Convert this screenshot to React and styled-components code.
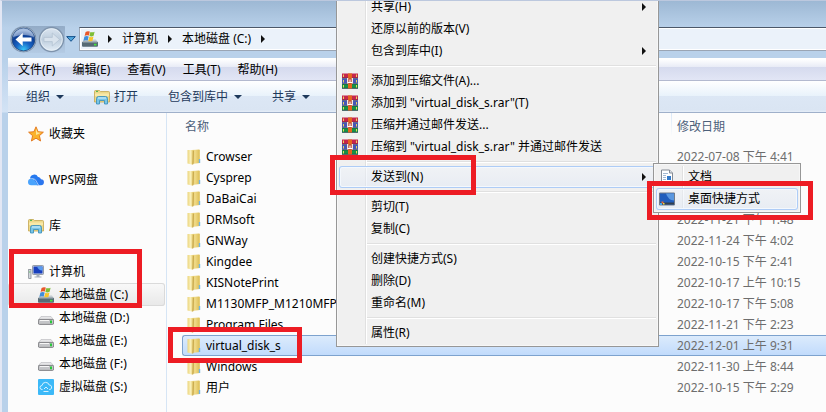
// Windows 7 explorer window with the "send to" context menu open

import React, { useState } from "react";
import styled, { createGlobalStyle, css } from "styled-components";

const GlobalStyle = createGlobalStyle`
  * {
    box-sizing: border-box;
  }
  body {
    margin: 0;
    overflow: hidden;
    background: #fcfcfc;
    font: 12px/20px "Noto Sans", "Noto Sans CJK SC", sans-serif;
    color: #000;
  }
  button {
    border: 0;
    padding: 0;
    background: none;
    color: inherit;
    font: inherit;
    white-space: nowrap;
  }
  svg {
    display: block;
    flex: none;
  }
`;

const Frame = styled.div`
  position: relative;
  display: flex;
  flex-direction: column;
  min-height: 100vh;
  overflow: hidden;
  padding-left: 6px;
  border-top: 1px solid #bcc8de;
  border-left: 2px solid #e3e7f4;
  background: linear-gradient(
    #9db8d4 0,
    #b9d1ea 27px,
    #b9d1ea 60px,
    #d3e3f5 111px,
    #b9d1ea 112px
  );
`;

const NavBar = styled.div`
  display: flex;
  align-items: center;
  height: 57px;
  padding: 19px 0 0 2px;
`;

const NavButtons = styled.div`
  display: flex;
  align-items: center;
  gap: 1px;
  margin-right: 3px;
  border-radius: 14px;
  background: linear-gradient(#93abc6, #b4cbe4) 0 0 / 55px 100% no-repeat;
`;

const Address = styled.div`
  display: flex;
  flex: 1;
  align-items: center;
  gap: 10px;
  height: 24px;
  padding-left: 2px;
  border: 1px solid #9aa5b4;
  border-top-color: #4c5869;
  border-right: 0;
  background: #ebf2fa;
  box-shadow: inset 1px 1px #fff, inset 0 -1px #fff;
`;

const MenuBar = styled.nav`
  display: flex;
  align-items: center;
  gap: 17px;
  height: 23px;
  padding-left: 10px;
  border-top: 1px solid #fff;
  border-bottom: 1px solid #b3b9cf;
  background: linear-gradient(#fff, #e8ebf6 8px, #d5daee 8px, #e2e6f5);
`;

const Toolbar = styled.div`
  display: flex;
  align-items: center;
  gap: 30px;
  height: 32px;
  padding-left: 18px;
  border-bottom: 1px solid #9fb0ca;
  background: linear-gradient(#fff, #e8f2fb 15px, #dce7f5 15px, #dae5f3 29px, #e6eef8);
  color: #1e395b;
`;

const ToolButton = styled.button`
  display: flex;
  align-items: center;
  gap: ${(props) => (props.$icon ? "4px" : "6px")};
`;

const Body = styled.div`
  display: flex;
  flex: 1;
  background: #fcfcfc;
`;

const Sidebar = styled.aside`
  flex: none;
  width: 159px;
  padding: 9px 1px 0 0;
  border-right: 1px solid #d6e5f5;
`;

const Place = styled.button`
  display: flex;
  align-items: center;
  gap: 5px;
  width: 100%;
  height: 23px;
  padding-left: ${(props) => (props.$nested ? "30px" : "20px")};
  margin-bottom: ${(props) => (props.$apart ? "23px" : "0")};
  ${(props) =>
    props.$active &&
    css`
      border-radius: 3px;
      background: linear-gradient(#f9f9f9, #e8e8e8);
      box-shadow: inset 0 0 0 1px #dadada;
    `}
`;

const Files = styled.main`
  flex: 1;
  padding-left: 15px;
`;

const FileTable = styled.table`
  width: 100%;
  table-layout: fixed;
  border-collapse: separate;
  border-spacing: 0;
`;

const HeadCell = styled.th`
  width: ${(props) => props.$width};
  height: 33px;
  padding: 0 0 5px ${(props) => (props.$width ? "3px" : "6px")};
  text-align: left;
  font-weight: 400;
  color: #4c607a;
  ${(props) =>
    !props.$width &&
    css`
      background: linear-gradient(#d9e7f7, #fcfcfc 24px) 0 0 / 1px 100% no-repeat;
    `}
`;

const FileRow = styled.tr`
  td {
    height: 21px;
    padding: 0 0 0 6px;
    line-height: 19px;
    white-space: nowrap;
    color: #6d6d6d;
    border: solid transparent;
    border-width: 1px 0;
  }
  td:first-child {
    padding-left: 4px;
    color: #000;
    border-left-width: 1px;
  }
  ${(props) =>
    props.$selected &&
    css`
      td {
        border-color: #7da2ce;
        background: linear-gradient(#dcebfc, #c1dbfc);
        background-clip: padding-box;
      }
      td:first-child {
        border-radius: 3px 0 0 3px;
      }
    `}
`;

const FileName = styled.div`
  display: flex;
  align-items: center;
  gap: 5px;
`;

const Popup = styled.div`
  position: absolute;
  top: ${(props) => props.$top}px;
  left: ${(props) => props.$left}px;
  width: ${(props) => props.$width}px;
  padding: 2px;
  border: 1px solid #979797;
  background: linear-gradient(90deg, #e0e0e0 1px, #fff 1px) 28px 2px / 2px
    calc(100% - 4px) no-repeat #f0f0f0;
  box-shadow: inset 0 0 0 1px #f7f7f7;
`;

const PopupItem = styled.button`
  display: grid;
  grid-template-columns: 27px 1fr 14px;
  align-items: center;
  gap: 2px;
  width: 100%;
  height: 22px;
  padding-left: 3px;
  border-radius: 3px;
  text-align: left;
  ${(props) =>
    props.$active &&
    css`
      background: linear-gradient(#f1f5fb80, #dfe8f680);
      box-shadow: inset 0 0 0 1px #aeccf6, inset 0 0 0 2px #f4f8fd;
    `}
`;

const Divider = styled.hr`
  height: 2px;
  margin: 3px 0 3px 28px;
  border: 0;
  border-top: 1px solid #e0e0e0;
  background: #fff;
`;

const Marker = styled.div`
  position: absolute;
  top: ${(props) => props.$box[1]}px;
  left: ${(props) => props.$box[0]}px;
  width: ${(props) => props.$box[2]}px;
  height: ${(props) => props.$box[3]}px;
  border: 5px solid #ed1c24;
  pointer-events: none;
`;

const RightArrow = () => (
  <svg width="4" height="8" viewBox="0 0 4 8">
    <path d="M0 0l4 4-4 4z" fill="#111" />
  </svg>
);

const DownArrow = () => (
  <svg width="8" height="4" viewBox="0 0 8 4">
    <path d="M0 0h8L4 4z" fill="#1e395b" />
  </svg>
);

const BackIcon = () => (
  <svg width="27" height="27" viewBox="0 0 27 27">
    <defs>
      <radialGradient id="back" cx=".5" cy=".95" r=".85">
        <stop offset="0" stopColor="#38c8f8" />
        <stop offset=".4" stopColor="#1763c4" />
        <stop offset=".75" stopColor="#0d3e94" />
        <stop offset="1" stopColor="#6d93cb" />
      </radialGradient>
    </defs>
    <circle cx="13.5" cy="13.5" r="12.8" fill="#6c809b" />
    <circle cx="13.5" cy="13.5" r="12" fill="#d6e4f2" />
    <circle cx="13.5" cy="13.5" r="11.4" fill="url(#back)" stroke="#1c4378" strokeWidth=".8" />
    <path d="M3 11a10.7 10.7 0 0 1 21 0q-10-4-21 0z" fill="#fff" opacity=".4" />
    <path d="M5.5 13.5l7.2-6.5v4.4h8.8v4.2h-8.8V20z" fill="#fff" />
  </svg>
);

const ForwardIcon = () => (
  <svg width="27" height="27" viewBox="0 0 27 27">
    <defs>
      <linearGradient id="forward" x2="0" y2="1">
        <stop offset="0" stopColor="#dce6f0" />
        <stop offset=".5" stopColor="#bdcddd" />
        <stop offset="1" stopColor="#e4eef7" />
      </linearGradient>
    </defs>
    <circle cx="13.5" cy="13.5" r="12" fill="url(#forward)" stroke="#7e93ac" strokeWidth="1.4" />
    <circle cx="13.5" cy="13.5" r="10.8" fill="none" stroke="#e9f1f8" strokeWidth=".8" />
    <path
      d="M21.5 13.5L14.3 7v4.4H6v4.2h8.3V20z"
      fill="#d9e3ed"
      stroke="#b0c0d0"
      strokeWidth=".7"
    />
  </svg>
);

const HistoryIcon = () => (
  <svg width="10" height="6" viewBox="0 0 10 6">
    <path d="M.7.6h8.6L5 5.3z" fill="#4fa6dc" stroke="#17518b" />
  </svg>
);

const SystemDriveIcon = () => (
  <svg width="16" height="16" viewBox="0 0 16 16">
    <path d="M2 8.5h12l2 3H0z" fill="#c3cbd0" />
    <rect y="10.8" width="16" height="5" rx="1" fill="#566a75" />
    <path d="M1 11.3h14" stroke="#93a6af" strokeWidth=".8" />
    <path d="M12 12.8h2.5v1.700H12z" fill="#45e33e" />
    <path d="M3.600.9Q5.800-.4 7.800.6L6.900 4.600Q4.700 3.600 2.600 4.900z" fill="#e8572a" />
    <path d="M8.400.9q2 1 4.200-.2l-1 4.100q-2.200 1.200-4.200.2z" fill="#7dbd37" />
    <path d="M2.400 5.600q2.200-1.200 4.300-.2l-1 4.200q-2-1-4.300.2z" fill="#3f8ddb" />
    <path d="M7.300 5.700q2 1 4.200-.2l-1 4.200q-2.200 1.200-4.200.2z" fill="#f7c52e" />
  </svg>
);

const DriveIcon = () => (
  <svg width="16" height="16" viewBox="0 0 16 16">
    <path d="M3 6.500h10l2.700 3.500H.3z" fill="#e6e6e8" stroke="#b7b7ba" strokeWidth=".6" />
    <rect x=".4" y="9.400" width="15.200" height="5" rx="1.200" fill="#c4c5c8" stroke="#6e6e72" strokeWidth=".8" />
    <path d="M2 10.500h9" stroke="#f6f6f6" />
    <path d="M12 10.500h2v2.800h-2z" fill="#29c83a" />
  </svg>
);

const LibraryIcon = () => (
  <svg width="16" height="16" viewBox="0 0 16 16">
    <path d="M.5 2.500q0-1 1-1h4l1 1h8q1 0 1 1V13h-15z" fill="#edd98a" stroke="#c4a650" strokeWidth=".8" />
    <path d="M1 4.500h14V7H1z" fill="#f8e9a8" />
    <path d="M2 2.400h2" stroke="#46b34b" />
    <path d="M2.500 15V9.500q0-2 2-2h7q2 0 2 2V15h-3v-3.500h-5V15z" fill="#79c5e7" stroke="#348cb9" strokeWidth=".8" />
    <path d="M4 9h8" stroke="#d9f3fd" />
  </svg>
);

const StarIcon = () => (
  <svg width="16" height="16" viewBox="0 0 16 16">
    <path
      d="M8 .8l2.100 4.900 5.300.5-4 3.500 1.200 5.300L8 12.200 3.400 15l1.200-5.300-4-3.500 5.300-.5z"
      fill="#fbb32c"
      stroke="#e1741a"
      strokeWidth=".9"
    />
    <path d="M8 2.800l1.500 3.600 3.500.4L8 9z" fill="#fde69b" />
  </svg>
);

const CloudIcon = () => (
  <svg width="16" height="16" viewBox="0 0 16 16">
    <path d="M10.500 5A4 4 0 0 1 13 7.200a3 3 0 0 1-.2 6.100H9L5 6z" fill="#2d75ee" />
    <path d="M2 6.500A4.200 4.200 0 0 1 10 5l4 8H9.500L5 6.500z" fill="#2579ef" />
    <path d="M3.200 13.300a3.300 3.300 0 0 1 .2-6.600q1.500 0 2.400 1.100L10 13.300z" fill="#4aa3fc" />
    <path d="M5.300 6.600q1.500.3 2.300 1.600l3 5" stroke="#d7eaff" strokeWidth=".7" fill="none" />
  </svg>
);

const ComputerIcon = () => (
  <svg width="16" height="16" viewBox="0 0 16 16">
    <rect x="4.500" y="1.500" width="11" height="9" rx=".8" fill="#d3d9e2" stroke="#737c8b" strokeWidth=".7" />
    <path d="M5.500 2.500h9v7h-9z" fill="#183fbe" />
    <path d="M9 2.500h5.500v4Q11 7 9 2.500z" fill="#5a9cf0" />
    <path d="M8.500 10.500h3v2h2v1h-7v-1h2z" fill="#a8b0bc" />
    <rect x=".7" y="5.500" width="2.300" height="9" fill="#d6dbe0" stroke="#757c85" strokeWidth=".7" />
    <path d="M1.300 8h1" stroke="#38b63d" />
  </svg>
);

const VirtualDiskIcon = () => (
  <svg width="16" height="16" viewBox="0 0 16 16">
    <rect width="16" height="16" rx="1" fill="#3cb9f8" />
    <path
      d="M4.500 10.500H4a2 2 0 0 1 0-4 3.700 3.700 0 0 1 7.200-.5 2.300 2.300 0 0 1 .8 4.500h-.8M6 10l2-2 2 2M5.500 12.500h5"
      fill="none"
      stroke="#e6f7ff"
      strokeWidth=".9"
    />
  </svg>
);

const FolderIcon = () => (
  <svg width="14" height="16" viewBox="0 0 14 16">
    <defs>
      <linearGradient id="folderBack">
        <stop offset="0" stopColor="#c9a640" />
        <stop offset=".35" stopColor="#f1dc8b" />
        <stop offset="1" stopColor="#dcbd52" />
      </linearGradient>
      <linearGradient id="folderFront">
        <stop offset="0" stopColor="#ecd57c" />
        <stop offset=".5" stopColor="#f9efb9" />
        <stop offset="1" stopColor="#e3c763" />
      </linearGradient>
    </defs>
    <path d="M5 1l7-.4q.8 0 .8.800V14L5 15z" fill="url(#folderBack)" />
    <path d="M.5.900h5q1 0 1 1L5.800 15.700.5 14.400z" fill="url(#folderFront)" />
    <path d="M6.300 2L5.800 15.500" stroke="#b8953a" strokeWidth=".7" />
    <path d="M11.800 10h1.400v4h-1.400z" fill="#6fb5e6" />
  </svg>
);

const RarIcon = () => (
  <svg width="16" height="16" viewBox="0 0 16 16">
    <path d="M0 .5h16V5H0z" fill="#c6254c" />
    <path d="M0 5.500h16v5H0z" fill="#4656b5" />
    <path d="M0 11h16v4.500H0z" fill="#159345" />
    <path d="M0 5.200h16M0 10.800h16M0 15.300h16" stroke="#252b4c" strokeWidth=".7" />
    <path d="M1.500 1.500v2.500M1.500 7v2.500M1.500 12v2.500M14.500 1.500v2.500M14.500 7v2.500M14.500 12v2.500" stroke="#e9d45b" />
    <path d="M6 .5h4v15H6z" fill="#e5641d" />
    <path d="M5 5.500h6v5H5z" fill="#b5452e" />
    <path d="M5.700 5v5.500M8 6.500v3.500M10.300 5v5.500M5.500 9.500h5" stroke="#fff" strokeWidth="1.100" />
  </svg>
);

const DocumentIcon = () => (
  <svg width="16" height="16" viewBox="0 0 16 16">
    <path d="M2.500 1h8l3 3v11.500h-11z" fill="#fff" stroke="#848b94" />
    <path d="M10.500 1v3h3" fill="#dce2e8" stroke="#848b94" />
    <path d="M4 4.500h5M4 6.500h3M4 8.500h3M4 10.500h3M4 12.500h8" stroke="#8ba7c7" strokeWidth=".8" />
    <path d="M8 7h4v4H8z" fill="#3279c9" />
  </svg>
);

const DesktopIcon = () => (
  <svg width="16" height="16" viewBox="0 0 16 16">
    <path d="M.5 2h15v12H.5z" fill="#215dbc" stroke="#717b89" />
    <path d="M7 2.500h8v7Q9 9 7 2.500z" fill="#5a97e0" />
    <path d="M1 11.500h14v2H1z" fill="#33404e" />
    <path d="M2.500 10.500h2v2h-2z" fill="#e9683b" />
    <path d="M1 12h2v2H1z" fill="#46a9ed" />
    <path d="M4 12h1.500v1.500H4z" fill="#f2db44" />
  </svg>
);

const menus = ["文件(F)", "编辑(E)", "查看(V)", "工具(T)", "帮助(H)"];

const places = [
  { name: "收藏夹", Icon: StarIcon, apart: true },
  { name: "WPS网盘", Icon: CloudIcon, apart: true },
  { name: "库", Icon: LibraryIcon, apart: true },
  { name: "计算机", Icon: ComputerIcon },
  { name: "本地磁盘 (C:)", Icon: SystemDriveIcon, nested: true, active: true },
  { name: "本地磁盘 (D:)", Icon: DriveIcon, nested: true },
  { name: "本地磁盘 (E:)", Icon: DriveIcon, nested: true },
  { name: "本地磁盘 (F:)", Icon: DriveIcon, nested: true },
  { name: "虚拟磁盘 (S:)", Icon: VirtualDiskIcon, nested: true },
];

const files = [
  ["Crowser", "2022-07-08 下午 4:41"],
  ["Cysprep", ""],
  ["DaBaiCai", ""],
  ["DRMsoft", "2022-11-21 下午 1:48"],
  ["GNWay", "2022-11-24 下午 4:02"],
  ["Kingdee", "2022-10-15 下午 2:41"],
  ["KISNotePrint", "2022-10-17 上午 10:15"],
  ["M1130MFP_M1210MFP", "2022-10-17 下午 5:08"],
  ["Program Files", "2022-11-21 下午 2:23"],
  ["virtual_disk_s", "2022-12-01 上午 9:31"],
  ["Windows", "2022-11-30 上午 8:44"],
  ["用户", "2022-10-15 下午 2:29"],
];

// null is a divider
const actions = [
  { name: "共享(H)", more: true },
  { name: "还原以前的版本(V)" },
  { name: "包含到库中(I)", more: true },
  null,
  { name: "添加到压缩文件(A)...", Icon: RarIcon },
  { name: '添加到 "virtual_disk_s.rar"(T)', Icon: RarIcon },
  { name: "压缩并通过邮件发送...", Icon: RarIcon },
  { name: '压缩到 "virtual_disk_s.rar" 并通过邮件发送', Icon: RarIcon },
  null,
  { name: "发送到(N)", more: true, active: true },
  null,
  { name: "剪切(T)" },
  { name: "复制(C)" },
  null,
  { name: "创建快捷方式(S)" },
  { name: "删除(D)" },
  { name: "重命名(M)" },
  null,
  { name: "属性(R)" },
];

const targets = [
  { name: "文档", Icon: DocumentIcon },
  { name: "桌面快捷方式", Icon: DesktopIcon, active: true },
];

const markers = [
  [7, 248, 133, 59],
  [166, 326, 134, 36],
  [328, 154, 146, 40],
  [645, 180, 166, 39],
];

function PopupMenu({ items, ...box }) {
  return (
    <Popup role="menu" {...box}>
      {items.map((item, i) =>
        item ? (
          <PopupItem key={item.name} role="menuitem" $active={item.active}>
            <span>{item.Icon && <item.Icon />}</span>
            <span>{item.name}</span>
            {item.more && <RightArrow />}
          </PopupItem>
        ) : (
          <Divider key={i} />
        )
      )}
    </Popup>
  );
}

export default function App() {
  const [selected, setSelected] = useState("virtual_disk_s");

  return (
    <>
      <GlobalStyle />
      <Frame>
        <NavBar>
          <NavButtons>
            <button aria-label="后退">
              <BackIcon />
            </button>
            <button aria-label="前进">
              <ForwardIcon />
            </button>
            <button aria-label="历史记录">
              <HistoryIcon />
            </button>
          </NavButtons>
          <Address>
            <SystemDriveIcon />
            <RightArrow />
            <button>计算机</button>
            <RightArrow />
            <button>本地磁盘 (C:)</button>
            <RightArrow />
          </Address>
        </NavBar>
        <MenuBar>
          {menus.map((name) => (
            <button key={name}>{name}</button>
          ))}
        </MenuBar>
        <Toolbar>
          <ToolButton>
            组织
            <DownArrow />
          </ToolButton>
          <ToolButton $icon>
            <LibraryIcon />
            打开
          </ToolButton>
          <ToolButton>
            包含到库中
            <DownArrow />
          </ToolButton>
          <ToolButton>
            共享
            <DownArrow />
          </ToolButton>
        </Toolbar>
        <Body>
          <Sidebar>
            {places.map(({ name, Icon, apart, nested, active }) => (
              <Place key={name} $apart={apart} $nested={nested} $active={active}>
                <Icon />
                {name}
              </Place>
            ))}
          </Sidebar>
          <Files>
            <FileTable>
              <thead>
                <tr>
                  <HeadCell $width="489px">名称</HeadCell>
                  <HeadCell>修改日期</HeadCell>
                </tr>
              </thead>
              <tbody>
                {files.map(([name, date]) => (
                  <FileRow
                    key={name}
                    $selected={name === selected}
                    onClick={() => setSelected(name)}
                  >
                    <td>
                      <FileName>
                        <FolderIcon />
                        {name}
                      </FileName>
                    </td>
                    <td>{date}</td>
                  </FileRow>
                ))}
              </tbody>
            </FileTable>
          </Files>
        </Body>
        <PopupMenu items={actions} $top={-8} $left={334} $width={323} />
        <PopupMenu items={targets} $top={162} $left={651} $width={148} />
        {markers.map((box) => (
          <Marker key={box.join()} $box={box} />
        ))}
      </Frame>
    </>
  );
}
